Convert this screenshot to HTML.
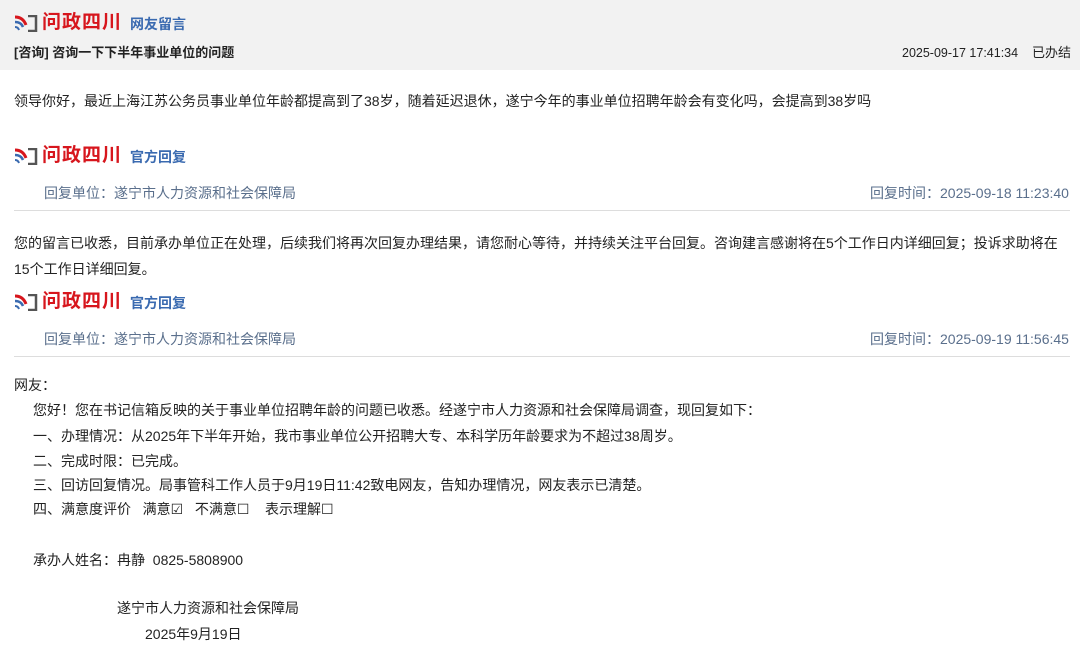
<!DOCTYPE html>
<html><head><meta charset="utf-8"><style>
body{margin:0;width:1080px;height:652px;background:#fff;font-family:"Liberation Sans","Noto Sans CJK SC",sans-serif;color:#222;position:relative;overflow:hidden}
.a{position:absolute;white-space:nowrap;font-size:14px;line-height:20px}
.hdr{position:absolute;left:0;top:0;width:1080px;height:70px;background:#f2f2f2}
.logo{position:absolute;left:14px;height:24px;width:300px;white-space:nowrap}
.logo svg{position:absolute;left:0;top:4px}
.logo .t{position:absolute;left:28px;top:0;font-size:19px;line-height:24px;color:#d7161d;font-weight:bold;letter-spacing:1px;white-space:nowrap}
.logo .s{position:absolute;left:116px;top:3px;font-size:14px;line-height:20px;color:#3a6ab0;font-weight:bold;white-space:nowrap}
.gray{color:#5a6f8c}
.hr{position:absolute;left:14px;width:1056px;height:1px;background:#ddd}
</style></head><body>
<div class="hdr"></div>
<div class="logo" style="top:11px"><svg width="24" height="17" viewBox="0 0 24 17"><path d="M1 2 Q9 2 12 10" stroke="#d7161d" stroke-width="3" fill="none"/><path d="M1 7 Q7 7 9 12" stroke="#3a6ab0" stroke-width="2.5" fill="none"/><path d="M1 12 Q4 12 5 15" stroke="#3a6ab0" stroke-width="2" fill="none"/><path d="M14 1 H22 V16 H14" stroke="#555" stroke-width="2.5" fill="none"/></svg><span class="t">问政四川</span><span class="s">网友留言</span></div>
<div class="a" style="left:14px;top:43px;font-size:13px;font-weight:bold">[咨询] 咨询一下下半年事业单位的问题</div>
<div class="a" style="left:902px;top:43px;font-size:12.5px">2025-09-17 17:41:34</div>
<div class="a" style="left:1032px;top:43px;font-size:13px">已办结</div>
<div class="a" style="left:14px;top:91px">领导你好，最近上海江苏公务员事业单位年龄都提高到了38岁，随着延迟退休，遂宁今年的事业单位招聘年龄会有变化吗，会提高到38岁吗</div>

<div class="logo" style="top:144px"><svg width="24" height="17" viewBox="0 0 24 17"><path d="M1 2 Q9 2 12 10" stroke="#d7161d" stroke-width="3" fill="none"/><path d="M1 7 Q7 7 9 12" stroke="#3a6ab0" stroke-width="2.5" fill="none"/><path d="M1 12 Q4 12 5 15" stroke="#3a6ab0" stroke-width="2" fill="none"/><path d="M14 1 H22 V16 H14" stroke="#555" stroke-width="2.5" fill="none"/></svg><span class="t">问政四川</span><span class="s">官方回复</span></div>
<div class="a gray" style="left:44px;top:183px">回复单位：遂宁市人力资源和社会保障局</div>
<div class="a gray" style="left:870px;top:183px">回复时间：2025-09-18 11:23:40</div>
<div class="hr" style="top:210px"></div>
<div class="a" style="left:14px;top:230px;white-space:normal;width:1056px;line-height:26px">您的留言已收悉，目前承办单位正在处理，后续我们将再次回复办理结果，请您耐心等待，并持续关注平台回复。咨询建言感谢将在5个工作日内详细回复；投诉求助将在15个工作日详细回复。</div>

<div class="logo" style="top:290px"><svg width="24" height="17" viewBox="0 0 24 17"><path d="M1 2 Q9 2 12 10" stroke="#d7161d" stroke-width="3" fill="none"/><path d="M1 7 Q7 7 9 12" stroke="#3a6ab0" stroke-width="2.5" fill="none"/><path d="M1 12 Q4 12 5 15" stroke="#3a6ab0" stroke-width="2" fill="none"/><path d="M14 1 H22 V16 H14" stroke="#555" stroke-width="2.5" fill="none"/></svg><span class="t">问政四川</span><span class="s">官方回复</span></div>
<div class="a gray" style="left:44px;top:329px">回复单位：遂宁市人力资源和社会保障局</div>
<div class="a gray" style="left:870px;top:329px">回复时间：2025-09-19 11:56:45</div>
<div class="hr" style="top:356px"></div>

<div class="a" style="left:14px;top:375px">网友：</div>
<div class="a" style="left:33px;top:400px">您好！您在书记信箱反映的关于事业单位招聘年龄的问题已收悉。经遂宁市人力资源和社会保障局调查，现回复如下：</div>
<div class="a" style="left:33px;top:426px">一、办理情况：从2025年下半年开始，我市事业单位公开招聘大专、本科学历年龄要求为不超过38周岁。</div>
<div class="a" style="left:33px;top:451px">二、完成时限：已完成。</div>
<div class="a" style="left:33px;top:475px">三、回访回复情况。局事管科工作人员于9月19日11:42致电网友，告知办理情况，网友表示已清楚。</div>
<div class="a" style="left:33px;top:499px">四、满意度评价&nbsp;&nbsp;&nbsp;满意☑&nbsp;&nbsp;&nbsp;不满意☐&nbsp;&nbsp;&nbsp;&nbsp;表示理解☐</div>
<div class="a" style="left:33px;top:550px">承办人姓名：冉静&nbsp;&nbsp;0825-5808900</div>
<div class="a" style="left:117px;top:598px">遂宁市人力资源和社会保障局</div>
<div class="a" style="left:145px;top:624px">2025年9月19日</div>
</body></html>
